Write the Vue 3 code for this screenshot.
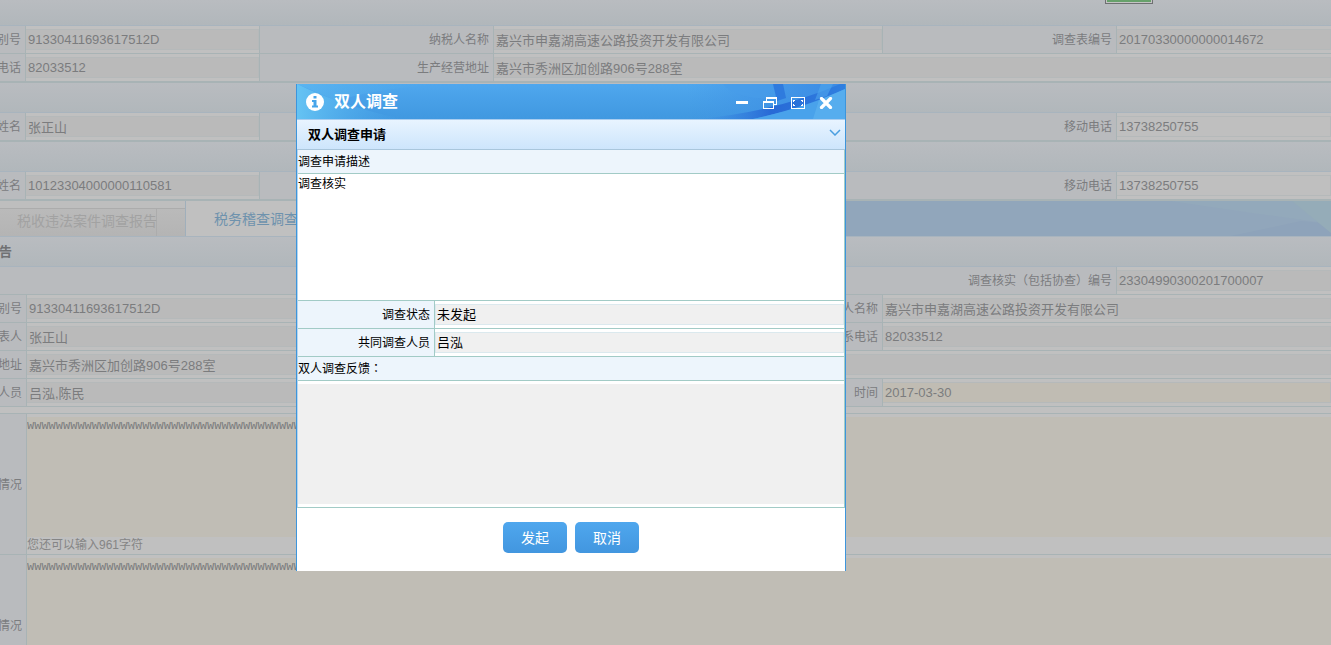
<script setup>
import { ref } from 'vue'

const company = '嘉兴市申嘉湖高速公路投资开发有限公司'
const address = '嘉兴市秀洲区加创路906号288室'

const basicRows = [
  [
    { id: 'b1', label: '别号', value: '91330411693617512D' },
    { id: 'b2', label: '纳税人名称', value: company },
    { id: 'b3', label: '调查表编号', value: '20170330000000014672' },
  ],
  [
    { id: 'b4', label: '电话', value: '82033512' },
    { id: 'b5', label: '生产经营地址', value: address, wide: 'span3' },
  ],
]
const people = [
  { id: 'p1', name: '张正山', phone: '13738250755' },
  { id: 'p2', name: '10123304000000110581', phone: '13738250755' },
]
const reportRows = [
  [
    { id: 'r1', label: '别号', value: '91330411693617512D', wide: 'span2' },
    { id: 'r2', label: '纳税人名称', value: company, wide: 'span2' },
  ],
  [
    { id: 'r3', label: '表人', value: '张正山', wide: 'span2' },
    { id: 'r4', label: '联系电话', value: '82033512', wide: 'span2' },
  ],
  [{ id: 'r5', label: '地址', value: address, wide: 'span5' }],
  [
    { id: 'r6', label: '人员', value: '吕泓,陈民', wide: 'span2' },
    { id: 'r7', label: '核实（协查）时间', value: '2017-03-30', wide: 'span2', edit: true },
  ],
]
const notes = ref(['w'.repeat(39), 'w'.repeat(39)])
const request = ref('调查核实')
const feedback = ref('')
</script>

<template>
  <div class="page">
    <section>
      <div class="band first"><button class="green" type="button" aria-label="保存"></button></div>
      <div v-for="(row, i) in basicRows" :key="i" class="row" :class="{ last: i === 1 }">
        <template v-for="f in row" :key="f.id">
          <label class="name" :for="f.id">{{ f.label }}</label>
          <div class="cell" :class="f.wide"><input :id="f.id" type="text" readonly :value="f.value" /></div>
        </template>
      </div>
      <template v-for="p in people" :key="p.id">
        <div class="band"></div>
        <div class="row last">
          <label class="name" :for="p.id">姓名</label>
          <div class="cell"><input :id="p.id" type="text" readonly :value="p.name" /></div>
          <label class="name span3" :for="p.id + 't'">移动电话</label>
          <div class="cell"><input :id="p.id + 't'" class="plain" type="text" :value="p.phone" /></div>
        </div>
      </template>
    </section>

    <nav class="tabs">
      <a class="tab off" href="#"><span>税收违法案件调查报告</span></a>
      <a class="tab on" href="#">税务稽查调查报告</a>
      <svg class="tabart" viewBox="0 0 160 35" preserveAspectRatio="none" aria-hidden="true">
        <path d="M0 0H160V23L40 6Z" fill="#93a9bb" />
        <path d="M60 35L130 20L160 23V35Z" fill="#8ea3ba" />
        <path d="M121 0H160V32Z" fill="#95acb8" />
      </svg>
    </nav>

    <section class="report">
      <div class="band"><b>告</b></div>
      <div class="row">
        <label class="name span5" for="no">调查核实<i>（</i>包括协查<i>）</i>编号</label>
        <div class="cell"><input id="no" type="text" readonly value="23304990300201700007" /></div>
      </div>
      <div v-for="(row, i) in reportRows" :key="i" class="row">
        <template v-for="f in row" :key="f.id">
          <label class="name" :class="{ mid: f.edit }" :for="f.id">{{ f.label }}</label>
          <div class="cell" :class="f.wide">
            <input :id="f.id" :class="{ edit: f.edit }" type="text" :readonly="!f.edit" :value="f.value" />
          </div>
        </template>
      </div>
      <div class="gap"></div>
      <div v-for="(n, i) in notes" :key="i" class="note">
        <label class="name" :for="'n' + i">情况</label>
        <div class="notebody">
          <textarea :id="'n' + i" v-model="notes[i]"></textarea>
          <p>您还可以输入{{ 1000 - notes[i].length }}字符</p>
        </div>
      </div>
    </section>

    <div class="dialog" role="dialog" aria-labelledby="dlg">
      <header class="title">
        <svg class="art" viewBox="0 0 548 35" preserveAspectRatio="none" aria-hidden="true">
          <defs>
            <linearGradient id="deep" x1="0" x2="1">
              <stop offset="0" stop-color="#3d8fe3" stop-opacity="0" />
              <stop offset=".5" stop-color="#2869d6" />
              <stop offset="1" stop-color="#2f7fe0" />
            </linearGradient>
            <linearGradient id="wash" x1="0" x2="1">
              <stop offset="0" stop-color="#3f90e6" stop-opacity="0" />
              <stop offset="1" stop-color="#3a8ae4" />
            </linearGradient>
            <linearGradient id="cyan" x1="0" x2="1">
              <stop offset="0" stop-color="#65c3f3" />
              <stop offset="1" stop-color="#4ba8ec" stop-opacity="0" />
            </linearGradient>
          </defs>
          <path d="M0 0Q45 22 105 35H0Z" fill="url(#cyan)" />
          <path d="M0 0H160Q80 3 40 17Z" fill="url(#cyan)" opacity=".5" />
          <path d="M390 0H548V35H390Z" fill="url(#wash)" />
          <path d="M400 35Q480 28 548 -2V8Q500 26 456 35Z" fill="url(#deep)" />
          <path d="M426 0H475L482 14Q440 17 426 0Z" fill="#489dea" opacity=".6" />
          <path d="M476 0H486L489 14L480 17Z" fill="#2f7bde" />
          <path d="M456 35Q510 23 548 5V35Z" fill="#49a2eb" />
          <path d="M516 35L522 16L548 5V35Z" fill="#5cb2ef" opacity=".7" />
          <path d="M524 0H536L530 12L518 16Z" fill="#4fa6ec" opacity=".6" />
        </svg>
        <svg class="info" viewBox="0 0 18 18" aria-hidden="true">
          <circle cx="9" cy="9" r="9" fill="#fff" />
          <path d="M7.5 3h3v2.500h-3zM6 7h4.500v5.500H12V14.500H6v-2h1.500V9H6z" fill="#46a5ea" />
        </svg>
        <h1 id="dlg">双人调查</h1>
        <button type="button" aria-label="最小化">
          <svg viewBox="0 0 14 12"><path d="M1 4H13V7H1Z" fill="#fff" /></svg>
        </button>
        <button type="button" aria-label="还原">
          <svg viewBox="0 0 14 12" shape-rendering="crispEdges">
            <path d="M3 0H14V8H11V7H13V2H4V4H3ZM0 4H11V12H0ZM1 6V11H10V6Z" fill="#fff" fill-rule="evenodd" />
          </svg>
        </button>
        <button type="button" aria-label="最大化">
          <svg viewBox="0 0 14 12" shape-rendering="crispEdges">
            <path d="M0 0H14V12H0ZM1 1V11H13V1Z" fill="#fff" fill-rule="evenodd" />
            <path d="M2 3H4V4H3V5H2ZM10 3H12V5H11V4H10ZM11 7H12V9H10V8H11ZM2 7H3V8H4V9H2Z" fill="#fff" />
          </svg>
        </button>
        <button type="button" aria-label="关闭">
          <svg viewBox="0 0 14 12"><path d="M2.500 1.500L11.500 10.500M11.500 1.500L2.500 10.500" stroke="#fff" stroke-width="3.200" stroke-linecap="round" /></svg>
        </button>
      </header>
      <div class="panel">
        <h2>双人调查申请</h2>
        <svg viewBox="0 0 12 7" aria-hidden="true"><path d="M1 1L6 6L11 1" fill="none" stroke="#4a9fe0" stroke-width="1.500" /></svg>
      </div>
      <div class="form">
        <label class="caption" for="req">调查申请描述</label>
        <textarea id="req" v-model="request" class="req"></textarea>
        <div class="pair">
          <label for="st">调查状态</label>
          <div><input id="st" type="text" readonly value="未发起" /></div>
        </div>
        <div class="pair">
          <label for="who">共同调查人员</label>
          <div><input id="who" type="text" readonly value="吕泓" /></div>
        </div>
        <label class="caption" for="fb">双人调查反馈<i>：</i></label>
        <div class="fbwrap"><textarea id="fb" v-model="feedback" readonly></textarea></div>
      </div>
      <footer>
        <button type="button">发起</button>
        <button type="button">取消</button>
      </footer>
    </div>
  </div>
</template>

<style>
html,
body {
  margin: 0;
  height: 100%;
  overflow: hidden;
}
</style>

<style scoped>
* {
  box-sizing: border-box;
}
.page {
  --line: #a8b3b5;
  position: relative;
  height: 100vh;
  overflow: hidden;
  background: #c0c0c0;
  color: #7b7c7e;
  font: 12px/18px "Liberation Sans", "Noto Sans CJK SC", sans-serif;
}
i,
.mid {
  font-style: normal;
  font-family: "Liberation Sans", "Noto Sans CJK TC", sans-serif;
}
input,
textarea,
button {
  font: inherit;
  color: inherit;
  border: 0;
  margin: 0;
  padding: 0;
  border-radius: 0;
  outline: 0;
}
textarea {
  display: block;
  width: 100%;
  resize: none;
  overflow: hidden;
}
.band {
  height: 30px;
  border-bottom: 1px solid #a8b4be;
  background: linear-gradient(#b9bcc0, #b1b7bb);
}
.band.first {
  height: 26px;
  display: flex;
  justify-content: flex-end;
  align-items: flex-start;
  padding-right: 178px;
}
.band b {
  display: block;
  font-size: 13px;
  line-height: 29px;
  color: #707173;
  margin-left: -1px;
}
.green {
  width: 48px;
  height: 4px;
  border: 1px solid #6f7072;
  border-top: 0;
  background: #67a16b;
  box-shadow: inset 1px -1px #c4c4c4, inset -1px 0 #c4c4c4;
}
.row {
  display: grid;
  grid-template-columns: 26px 234px 234px 1fr 234px 214px;
  height: 28px;
  border-bottom: 1px solid var(--line);
}
.row.last {
  height: 29px;
  border-bottom-width: 2px;
}
.report .row {
  grid-template-columns: 27px 233px 234px 1fr 234px 214px;
}
.name {
  display: flex;
  justify-content: flex-end;
  align-items: center;
  padding: 1px 4px 0 0;
  overflow: hidden;
  white-space: nowrap;
  border-right: 1px solid var(--line);
  background: #b9bbbe;
}
.cell {
  padding: 3px 0;
  border-right: 1px solid var(--line);
  min-width: 0;
}
.cell:last-child {
  border-right: 0;
}
.cell input {
  display: block;
  width: 100%;
  height: 21px;
  padding: 0 2px;
  border: 1px solid #b5b9ba;
  border-left: 0;
  background: #bababa;
  font-size: 13px;
}
.cell input.plain {
  background: #bfbfbf;
}
.cell input.edit {
  background: #c0bcb3;
}
.span2 {
  grid-column: span 2;
}
.span3 {
  grid-column: span 3;
}
.span5 {
  grid-column: span 5;
}
.tabs {
  position: relative;
  display: flex;
  height: 36px;
  background: #91a6bb;
  border-bottom: 1px solid #a8b4be;
  font-size: 14px;
  line-height: 37px;
}
.tab {
  text-decoration: none;
  white-space: nowrap;
}
.tab.off {
  width: 186px;
  padding-top: 7px;
  border-right: 1px solid #a0afbb;
  background: #bebebe;
  color: #a2a2a2;
  line-height: 24px;
}
.tab.off span {
  display: block;
  height: 28px;
  padding-left: 17px;
  border-top: 1px solid #acacac;
  background: linear-gradient(90deg, transparent 156px, #acacac 156px, #acacac 157px, transparent 157px), linear-gradient(#bababa, #b4b4b4);
}
.tab.on {
  width: 186px;
  padding-left: 28px;
  background: #c0c0c0;
  color: #6e92ad;
}
.tabart {
  width: 160px;
  height: 35px;
  margin-left: auto;
}
.gap {
  height: 7px;
  border-bottom: 1px solid var(--line);
}
.note {
  display: grid;
  grid-template-columns: 27px 1fr;
  height: 141px;
  border-bottom: 1px solid var(--line);
}
.notebody {
  padding-top: 3px;
}
.notebody textarea {
  height: 120px;
  padding-top: 3px;
  background: #c0bdb5;
  font: 12px/12px "Liberation Mono", monospace;
}
.notebody p {
  margin: 0;
  line-height: 16px;
  color: #858585;
}
.dialog {
  position: absolute;
  left: 296px;
  top: 84px;
  width: 550px;
  border: solid #3d95dc;
  border-width: 0 1px;
  background: #fff;
  color: #000;
}
.title {
  position: relative;
  display: flex;
  align-items: center;
  height: 35px;
  padding-right: 12px;
  background: linear-gradient(#4fa7ee, #4098e0);
  color: #fff;
}
.art {
  position: absolute;
  inset: 0;
  width: 100%;
  height: 100%;
}
.info {
  position: relative;
  width: 18px;
  height: 18px;
  margin: 0 10px 0 9px;
}
.title h1 {
  position: relative;
  margin: 0 auto 0 0;
  font-size: 16px;
  line-height: 35px;
  font-weight: 700;
}
.title button {
  position: relative;
  width: 14px;
  height: 12px;
  margin-left: 14px;
  margin-top: 3px;
  background: none;
}
.title button svg {
  display: block;
  width: 14px;
  height: 12px;
}
.panel {
  display: flex;
  justify-content: space-between;
  height: 31px;
  padding: 0 4px 0 11px;
  border-top: 1px solid #a9cdf0;
  border-bottom: 1px solid #a9c6dc;
  background: linear-gradient(#e8f4ff, #cde5fc);
}
.panel h2 {
  margin: 0;
  font-size: 13px;
  line-height: 29px;
}
.panel svg {
  width: 12px;
  height: 7px;
  margin-top: 9px;
}
.form {
  --rule: #a2cbc6;
  border: solid var(--rule);
  border-width: 0 1px 1px;
  border-left-color: #b5d5ee;
}
.caption {
  display: block;
  height: 24px;
  padding-top: 1px;
  line-height: 22px;
  border-bottom: 1px solid var(--rule);
  background: #edf5fc;
}
.req {
  height: 127px;
  padding-top: 1px;
  line-height: 18px;
  border-bottom: 1px solid var(--rule);
  background: #fff;
}
.pair {
  display: grid;
  grid-template-columns: 137px 1fr;
  height: 28px;
  border-bottom: 1px solid var(--rule);
}
.pair label {
  padding: 1px 4px 0 0;
  text-align: right;
  line-height: 26px;
  border-right: 1px solid var(--rule);
  background: #edf5fc;
}
.pair div {
  padding: 3px 0;
}
.pair input {
  display: block;
  width: 100%;
  height: 21px;
  padding: 0 1px 2px;
  border: 1px solid #dbe9ee;
  background: #f0f0f0;
  font-size: 13px;
}
.fbwrap {
  padding: 3px 0;
}
.fbwrap textarea {
  height: 120px;
  background: #f0f0f0;
}
footer {
  display: flex;
  justify-content: center;
  gap: 8px;
  padding: 14px 0 18px;
}
footer button {
  width: 64px;
  height: 31px;
  padding-top: 1px;
  border-radius: 5px;
  background: linear-gradient(#4fa7ee, #4296df);
  color: #fff;
  font-size: 14px;
}
</style>
